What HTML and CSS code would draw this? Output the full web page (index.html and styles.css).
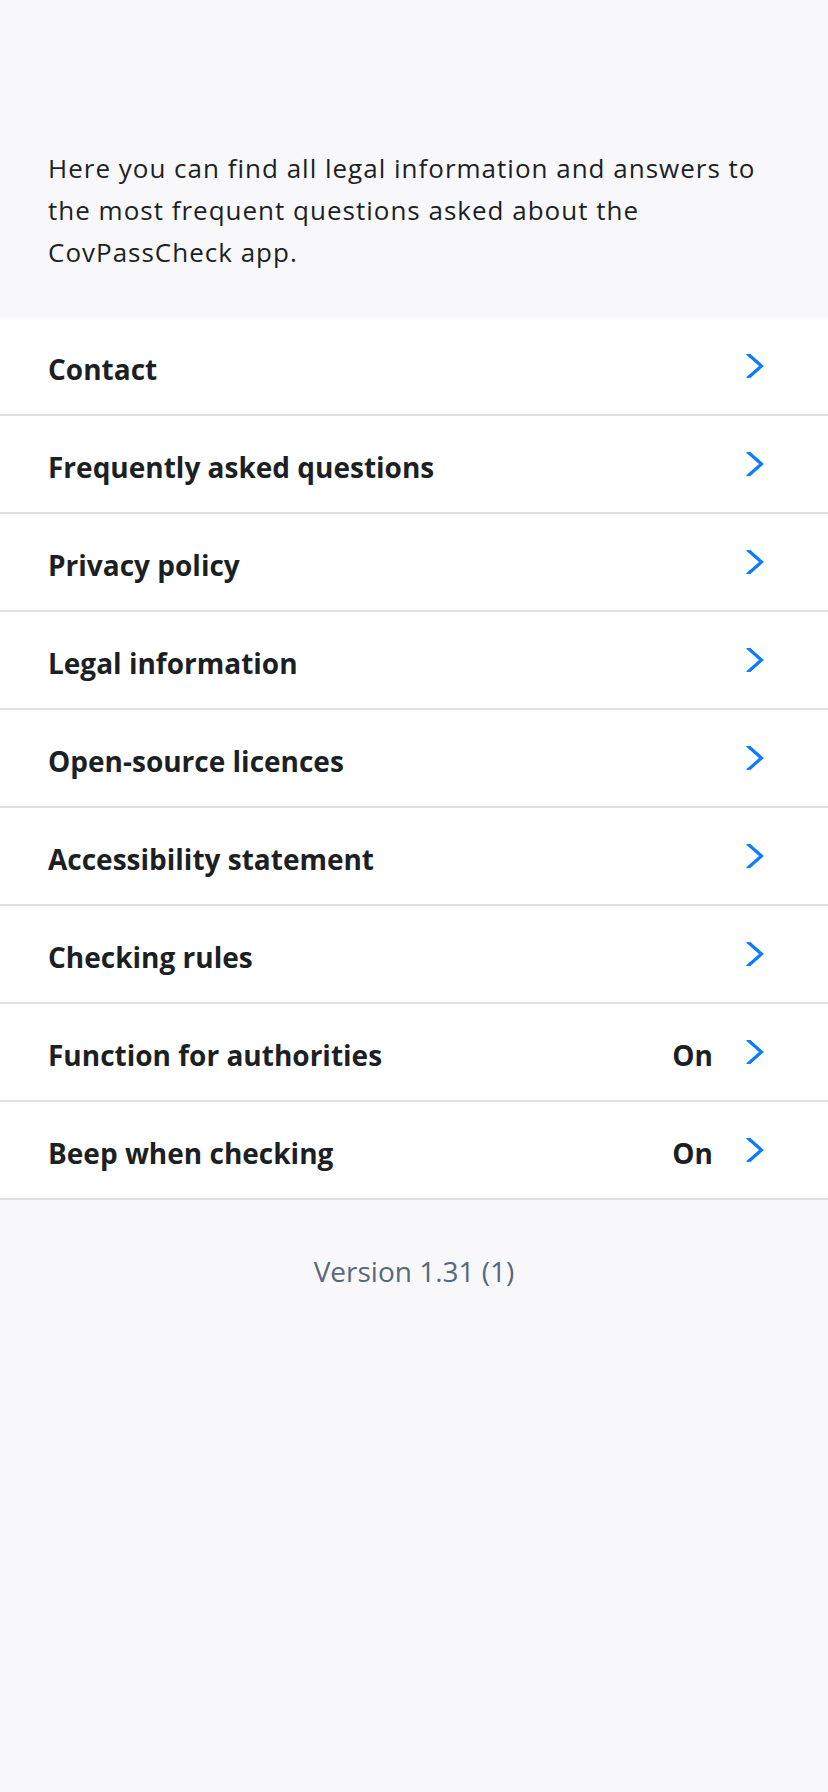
FILE: index.html
```html
<!DOCTYPE html>
<html lang="en">
<head>
<meta charset="utf-8">
<title>Information</title>
<link rel="stylesheet" href="styles.css">
</head>
<body>
<div class="page">
  <p class="intro">Here you can find all legal information and answers to the most frequent questions asked about the CovPassCheck app.</p>
  <ul class="list">
    <li class="row"><span class="label">Contact</span><span class="chev"><svg viewBox="0 0 24 24" width="24" height="24"><path d="M5.5 0.5 L18.5 12 L5.5 23.5"/></svg></span></li>
    <li class="row"><span class="label">Frequently asked questions</span><span class="chev"><svg viewBox="0 0 24 24" width="24" height="24"><path d="M5.5 0.5 L18.5 12 L5.5 23.5"/></svg></span></li>
    <li class="row"><span class="label">Privacy policy</span><span class="chev"><svg viewBox="0 0 24 24" width="24" height="24"><path d="M5.5 0.5 L18.5 12 L5.5 23.5"/></svg></span></li>
    <li class="row"><span class="label">Legal information</span><span class="chev"><svg viewBox="0 0 24 24" width="24" height="24"><path d="M5.5 0.5 L18.5 12 L5.5 23.5"/></svg></span></li>
    <li class="row"><span class="label">Open-source licences</span><span class="chev"><svg viewBox="0 0 24 24" width="24" height="24"><path d="M5.5 0.5 L18.5 12 L5.5 23.5"/></svg></span></li>
    <li class="row"><span class="label">Accessibility statement</span><span class="chev"><svg viewBox="0 0 24 24" width="24" height="24"><path d="M5.5 0.5 L18.5 12 L5.5 23.5"/></svg></span></li>
    <li class="row"><span class="label">Checking rules</span><span class="chev"><svg viewBox="0 0 24 24" width="24" height="24"><path d="M5.5 0.5 L18.5 12 L5.5 23.5"/></svg></span></li>
    <li class="row"><span class="label">Function for authorities</span><span class="value">On</span><span class="chev"><svg viewBox="0 0 24 24" width="24" height="24"><path d="M5.5 0.5 L18.5 12 L5.5 23.5"/></svg></span></li>
    <li class="row"><span class="label">Beep when checking</span><span class="value">On</span><span class="chev"><svg viewBox="0 0 24 24" width="24" height="24"><path d="M5.5 0.5 L18.5 12 L5.5 23.5"/></svg></span></li>
  </ul>
  <p class="version">Version 1.31 (1)</p>
</div>
</body>
</html>
```
FILE: styles.css
```css
html, body {
  margin: 0;
  padding: 0;
  background: #f8f8fa;
}
.page {
  min-height: 1792px;
  background: #f8f8fa;
  font-family: "Open Sans", "Noto Sans", sans-serif;
  color: #1c1f24;
}
.intro {
  margin: 0;
  padding: 147px 48px 45px 48px;
  font-size: 26px;
  line-height: 42px;
  letter-spacing: 1px;
  font-weight: 400;
}
.list {
  list-style: none;
  margin: 0;
  padding: 0;
  background: #ffffff;
}
.row {
  display: flex;
  align-items: center;
  height: 96px;
  padding: 0 61px 0 48px;
  border-bottom: 2px solid #e0e0e2;
}
.label {
  flex: 1;
  font-size: 28px;
  font-weight: 700;
  padding-top: 5px;
}
.value {
  font-size: 28px;
  font-weight: 700;
  margin-right: 30px;
  padding-top: 5px;
}
.chev {
  display: flex;
  width: 24px;
  height: 24px;
}
.chev svg {
  fill: none;
  stroke: #0a7cff;
  stroke-width: 3.2;
  stroke-linecap: square;
  stroke-linejoin: miter;
}
.version {
  margin: 0;
  padding-top: 53px;
  text-align: center;
  font-size: 28px;
  line-height: 36px;
  color: #576878;
}
```
